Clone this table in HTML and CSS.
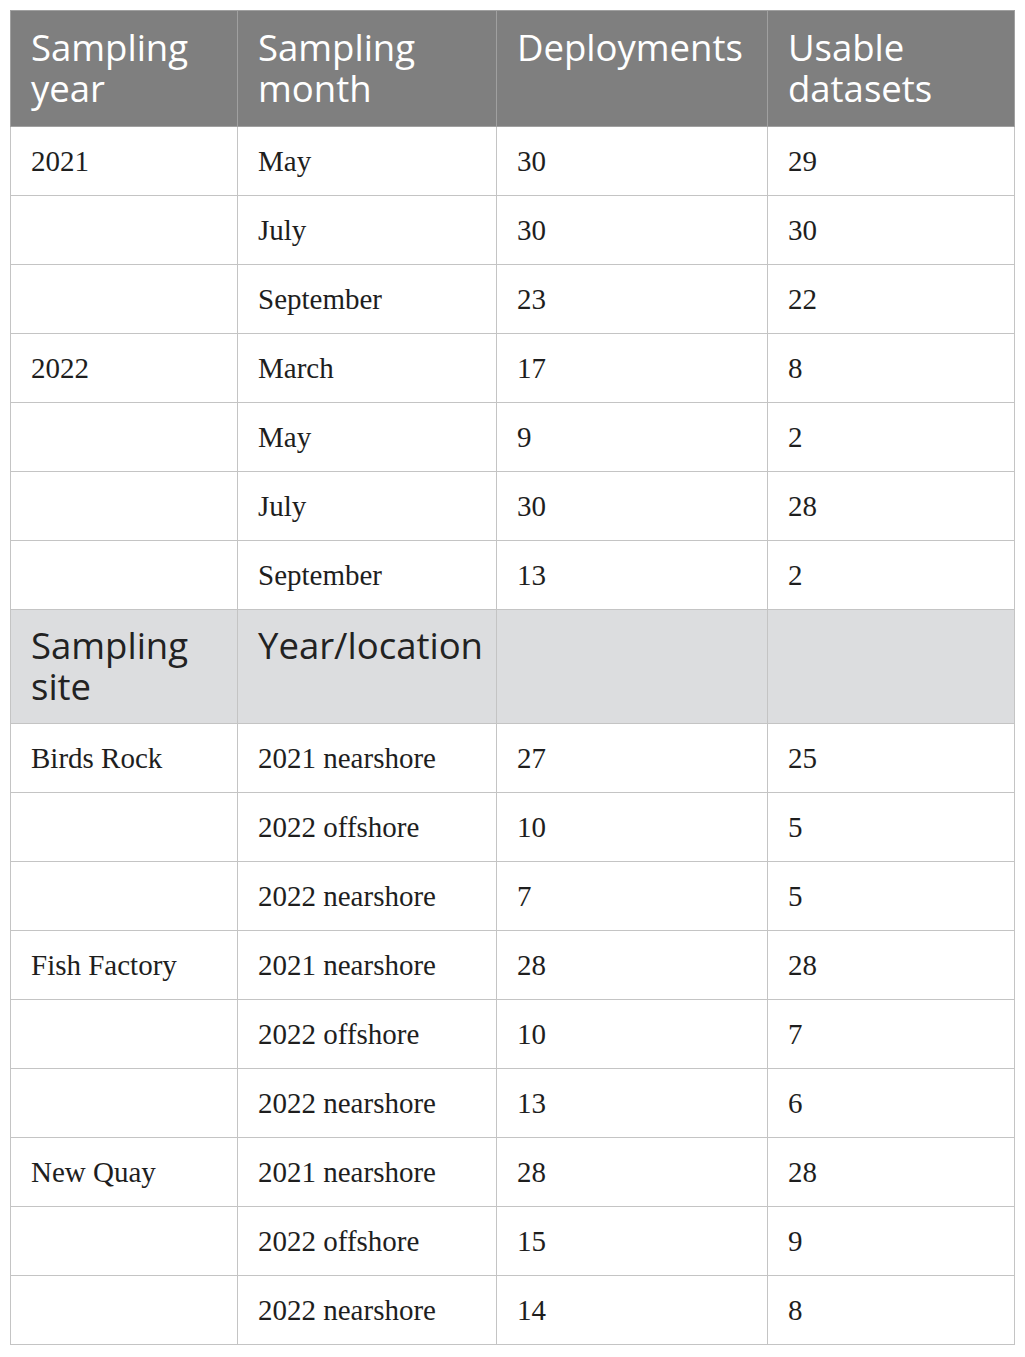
FILE: index.html
```html
<html>
    <head>
        <title>Sampling deployments</title>
        <link rel="stylesheet" href="styles.css">
    </head>
    <body>
        <table class="data">
            <colgroup>
                <col class="c1"><col class="c2"><col class="c3"><col class="c4">
            </colgroup>
            <thead>
                <tr class="head">
                    <th>Sampling year</th>
                    <th>Sampling month</th>
                    <th>Deployments</th>
                    <th>Usable datasets</th>
                </tr>
            </thead>
            <tbody>
                <tr><td>2021</td><td>May</td><td>30</td><td>29</td></tr>
                <tr><td></td><td>July</td><td>30</td><td>30</td></tr>
                <tr><td></td><td>September</td><td>23</td><td>22</td></tr>
                <tr><td>2022</td><td>March</td><td>17</td><td>8</td></tr>
                <tr><td></td><td>May</td><td>9</td><td>2</td></tr>
                <tr><td></td><td>July</td><td>30</td><td>28</td></tr>
                <tr><td></td><td>September</td><td>13</td><td>2</td></tr>
                <tr class="sub">
                    <th>Sampling site</th>
                    <th>Year/location</th>
                    <th></th>
                    <th></th>
                </tr>
                <tr><td>Birds Rock</td><td>2021 nearshore</td><td>27</td><td>25</td></tr>
                <tr><td></td><td>2022 offshore</td><td>10</td><td>5</td></tr>
                <tr><td></td><td>2022 nearshore</td><td>7</td><td>5</td></tr>
                <tr><td>Fish Factory</td><td>2021 nearshore</td><td>28</td><td>28</td></tr>
                <tr><td></td><td>2022 offshore</td><td>10</td><td>7</td></tr>
                <tr><td></td><td>2022 nearshore</td><td>13</td><td>6</td></tr>
                <tr><td>New Quay</td><td>2021 nearshore</td><td>28</td><td>28</td></tr>
                <tr><td></td><td>2022 offshore</td><td>15</td><td>9</td></tr>
                <tr><td></td><td>2022 nearshore</td><td>14</td><td>8</td></tr>
            </tbody>
        </table>
    </body>
</html>
```

FILE: styles.css
```css
body {
    background: #fff;
    color: #1e1e1e;
    margin: 10px;
}

.data {
    border-collapse: collapse;
    table-layout: fixed;
    width: 1004px;
}

.c1 { width: 227px; }
.c2 { width: 259px; }
.c3 { width: 271px; }
.c4 { width: 247px; }

.data th,
.data td {
    border: 1px solid #c4c4c4;
    text-align: left;
    vertical-align: top;
}

.data th {
    font-family: "Open Sans", sans-serif;
    font-size: 36.5px;
    font-weight: normal;
    line-height: 41px;
    padding: 16px 12px 17px 20px;
}

.head th {
    background: #7f7f7f;
    color: #fff;
    border-color: #a0a0a0;
}

.sub th {
    background: #dcdddf;
    color: #222;
    padding: 15px 12px 16px 20px;
}

.data td {
    font-family: "Liberation Serif", serif;
    font-size: 29px;
    height: 69px;
    line-height: 32px;
    padding: 18px 20px 18px 20px;
    box-sizing: border-box;
}
```
